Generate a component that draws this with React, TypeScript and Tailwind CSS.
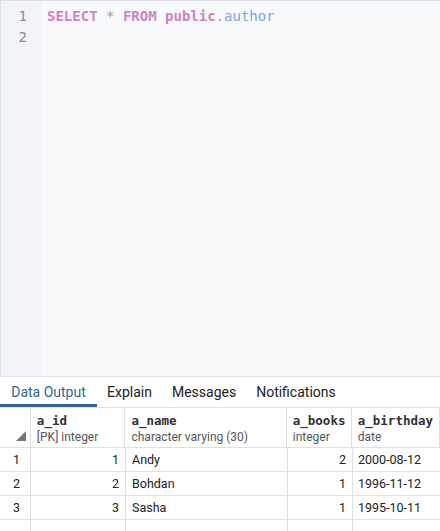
const rows = [
  { n: 1, id: 1, name: "Andy", books: 2, birthday: "2000-08-12" },
  { n: 2, id: 2, name: "Bohdan", books: 1, birthday: "1996-11-12" },
  { n: 3, id: 3, name: "Sasha", books: 1, birthday: "1995-10-11" },
];

const cols = [
  { key: "a_id", type: "[PK] integer", w: "w-[95px]" },
  { key: "a_name", type: "character varying (30)", w: "w-[162px]" },
  { key: "a_books", type: "integer", w: "w-[65px]" },
  { key: "a_birthday", type: "date", w: "flex-1" },
];

export default function App() {
  return (
    <div className="w-[440px] h-[531px] flex flex-col overflow-hidden bg-white font-['Roboto',sans-serif]">
      {/* editor */}
      <div className="h-[377px] shrink-0 flex border-t border-l border-b border-[#dde0e6] bg-[#f8f9fb]">
        <div className="w-[41px] bg-[#f3f4f8] pt-[5px] flex flex-col items-end pr-[15px] font-['DejaVu_Sans_Mono',monospace] text-[14px] leading-[21px] text-[#8a8a8a]">
          <span>1</span>
          <span>2</span>
        </div>
        <div className="pl-[5px] pt-[5px] font-['DejaVu_Sans_Mono',monospace] text-[14px] leading-[21px] whitespace-pre">
          <span className="font-bold text-[#d17fc9]">SELECT</span>
          <span className="text-[#999]"> * </span>
          <span className="font-bold text-[#d17fc9]">FROM</span>
          <span className="font-bold text-[#d17fc9]"> public</span>
          <span className="text-[#7aa6da]">.author</span>
        </div>
      </div>

      {/* tabs */}
      <div className="h-[31px] shrink-0 flex items-stretch text-[14px] text-[#222] border-b border-[#dde0e6]">
        <div className="w-[97px] flex items-center justify-center text-[#326690] border-b-[3px] border-[#326690] pt-[3px]">
          Data Output
        </div>
        <div className="px-[10px] flex items-center">Explain</div>
        <div className="px-[10px] flex items-center">Messages</div>
        <div className="px-[10px] flex items-center">Notifications</div>
      </div>

      {/* grid */}
      <div className="flex flex-col text-[12.5px] text-[#222] overflow-hidden">
        <div className="h-[40px] shrink-0 flex border-b border-[#dde0e6]">
          <div className="w-[31px] border-r border-[#dde0e6] relative">
            <svg className="absolute left-[16px] bottom-[6px]" width="10" height="10" viewBox="0 0 10 10">
              <polygon points="10,0 10,10 0,10" fill="#777" />
            </svg>
          </div>
          {cols.map((c) => (
            <div
              key={c.key}
              className={`${c.w} border-r border-[#dde0e6] px-[6px] pt-[5px] flex flex-col leading-[16px]`}
            >
              <span className="font-bold font-['DejaVu_Sans_Mono',monospace] text-[12.5px] text-[#333]">
                {c.key}
              </span>
              <span className="text-[#555] text-[12px]">{c.type}</span>
            </div>
          ))}
        </div>
        {rows.map((r) => (
          <div key={r.n} className="h-[24px] shrink-0 flex border-b border-[#dde0e6] items-stretch">
            <div className="w-[31px] border-r border-[#dde0e6] flex items-center pt-[2px] pl-[13px]">{r.n}</div>
            <div className="w-[95px] border-r border-[#dde0e6] flex items-center justify-end pt-[2px] pr-[6px]">{r.id}</div>
            <div className="w-[162px] border-r border-[#dde0e6] flex items-center pt-[2px] pl-[6px]">{r.name}</div>
            <div className="w-[65px] border-r border-[#dde0e6] flex items-center justify-end pt-[2px] pr-[6px]">{r.books}</div>
            <div className="flex-1 flex items-center pt-[2px] pl-[5px]">{r.birthday}</div>
          </div>
        ))}
        <div className="h-[24px] shrink-0 flex">
          <div className="w-[31px] border-r border-[#dde0e6]" />
          <div className="w-[95px] border-r border-[#dde0e6]" />
          <div className="w-[162px] border-r border-[#dde0e6]" />
          <div className="w-[65px] border-r border-[#dde0e6]" />
          <div className="flex-1" />
        </div>
      </div>
    </div>
  );
}
